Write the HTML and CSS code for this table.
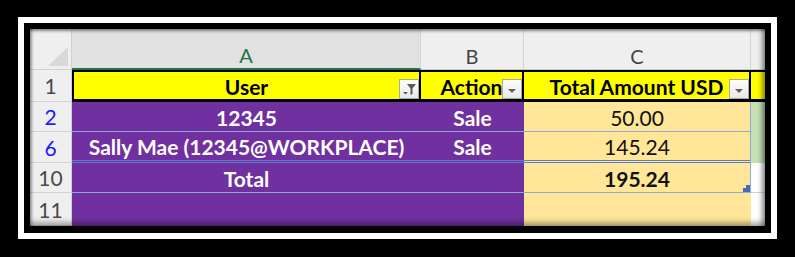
FILE: index.html
```html
<!DOCTYPE html>
<html>
<head>
  <title>Sales Totals</title>
  <link rel="stylesheet" href="styles.css">
</head>
<body>
  <div class="frame">
    <div class="sheet">

      <!-- column letters -->
      <div class="corner"><span class="corner-tri"></span></div>
      <div class="col-head col-selected">A</div>
      <div class="col-head">B</div>
      <div class="col-head">C</div>
      <div class="col-head col-tail"></div>

      <!-- 1: table header with filter buttons -->
      <div class="row-head">1</div>
      <div class="cell th th-first">User
        <span class="drop">
          <svg width="18" height="18" viewBox="0 0 18 18">
            <polygon points="7,4 16,4 12.5,8.5 12.5,14 10.5,15 10.5,8.5" fill="#5a5a5a"/>
            <polygon points="3,12 8,12 5.5,14.5" fill="#5a5a5a"/>
          </svg>
        </span>
      </div>
      <div class="cell th">Action
        <span class="drop"><span class="caret"></span></span>
      </div>
      <div class="cell th">Total Amount USD
        <span class="drop"><span class="caret"></span></span>
      </div>
      <div class="cell th th-tail"></div>

      <!-- 2 -->
      <div class="row-head row-filtered">2</div>
      <div class="cell purple line">12345</div>
      <div class="cell purple line">Sale</div>
      <div class="cell amount line">50.00</div>
      <div class="cell spare green"></div>

      <!-- 6 -->
      <div class="row-head row-filtered">6</div>
      <div class="cell purple hidden-below">Sally Mae (12345@WORKPLACE)</div>
      <div class="cell purple hidden-below">Sale</div>
      <div class="cell amount hidden-below">145.24</div>
      <div class="cell spare green"></div>

      <!-- 10: totals -->
      <div class="row-head">10</div>
      <div class="cell purple line">Total</div>
      <div class="cell purple line"></div>
      <div class="cell amount line total">195.24
        <svg class="resize" width="7" height="7" viewBox="0 0 7 7">
          <polygon points="3,0 7,0 7,7 0,7 0,3 3,3" fill="#4a68c0"/>
        </svg>
      </div>
      <div class="cell spare grid-line"></div>

      <!-- 11 -->
      <div class="row-head">11</div>
      <div class="cell purple"></div>
      <div class="cell purple"></div>
      <div class="cell amount open"></div>
      <div class="cell spare"></div>

    </div>
  </div>
</body>
</html>
```

FILE: styles.css
```css
html, body {
  margin: 0;
  background: #000;
}

body {
  width: 795px;
  height: 257px;
  overflow: hidden;
  font-family: Lato, "Open Sans", sans-serif;
}

.frame {
  box-sizing: border-box;
  width: 759px;
  height: 222px;
  margin: 17px 0 0 18px;
  border: 6px solid #fff;
  padding: 6px;
  background: #000;
}

.sheet {
  position: relative;
  display: grid;
  grid-template-columns: 42px 349px 103px 227px 14px;
  grid-template-rows: 41px 32px 30px 31px 30px 33px;
  height: 197px;
  overflow: hidden;
  background: #fff;
}

/* soft edge shading on the sheet */
.sheet::after {
  content: "";
  position: absolute;
  inset: 0;
  pointer-events: none;
  box-shadow:
    inset 0 4px 3px -2px rgba(0, 0, 0, 0.45),
    inset 4px 0 3px -2px rgba(0, 0, 0, 0.35),
    inset -8px 0 5px -5px rgba(0, 0, 0, 0.45),
    inset 0 -7px 6px -4px rgba(0, 0, 0, 0.4);
}

/* headers */
.corner {
  position: relative;
  background: #efefef;
  border-right: 1px solid #d0d0d0;
  border-bottom: 1px solid #d0d0d0;
}

.corner-tri {
  position: absolute;
  right: 3px;
  bottom: 3px;
  width: 0;
  height: 0;
  border-left: 20px solid transparent;
  border-bottom: 19px solid #d8d8d8;
}

.col-head {
  box-sizing: border-box;
  display: flex;
  justify-content: center;
  align-items: flex-end;
  padding-bottom: 1px;
  background: #efefef;
  border-right: 1px solid #d4d4d4;
  border-bottom: 1px solid #c8c8c8;
  font-size: 20px;
  color: #444;
}

.col-selected {
  background: #e1e1e1;
  border-bottom: 2px solid #217346;
  color: #217346;
}

.col-tail {
  border-right: none;
}

.row-head {
  box-sizing: border-box;
  display: flex;
  justify-content: center;
  align-items: center;
  background: #efefef;
  border-right: 1px solid #d0d0d0;
  border-bottom: 1px solid #d4d4d4;
  font-size: 21px;
  color: #4a4a4a;
}

.row-filtered {
  color: #1a1aff;
}

/* cells */
.cell {
  position: relative;
  box-sizing: border-box;
  display: flex;
  justify-content: center;
  align-items: center;
  padding-top: 1px;
  white-space: nowrap;
  font-size: 21px;
}

.th {
  background: #ffff00;
  border-top: 2px solid #000;
  border-bottom: 3px solid #000;
  border-right: 2px solid #000;
  padding-top: 2px;
  font-weight: bold;
  color: #000;
}

.th-first {
  border-left: 2px solid #000;
}

.th-tail {
  border-right: none;
}

.drop {
  position: absolute;
  right: 0;
  bottom: 0;
  box-sizing: border-box;
  width: 20px;
  height: 20px;
  display: flex;
  justify-content: center;
  align-items: center;
  border: 1px solid #a9a9a9;
  background: linear-gradient(#fdfdfd, #e9e9e9);
}

.caret {
  width: 0;
  height: 0;
  margin-top: 3px;
  border-left: 4px solid transparent;
  border-right: 4px solid transparent;
  border-top: 4px solid #606060;
}

.purple {
  background: #7030a0;
  color: #fff;
  font-weight: bold;
}

.amount {
  background: #ffe699;
  color: #111;
  border-right: 1px solid #8eaadb;
}

.amount.open {
  border-right: none;
}

.total {
  font-weight: bold;
}

.line {
  border-bottom: 1px solid #8eaadb;
}

.hidden-below {
  border-bottom: 3px double #5b7fcc;
}

.green {
  background: #c6e0b4;
}

.grid-line {
  border-bottom: 1px solid #d4d4d4;
}

.resize {
  position: absolute;
  right: 0;
  bottom: 0;
}
```
